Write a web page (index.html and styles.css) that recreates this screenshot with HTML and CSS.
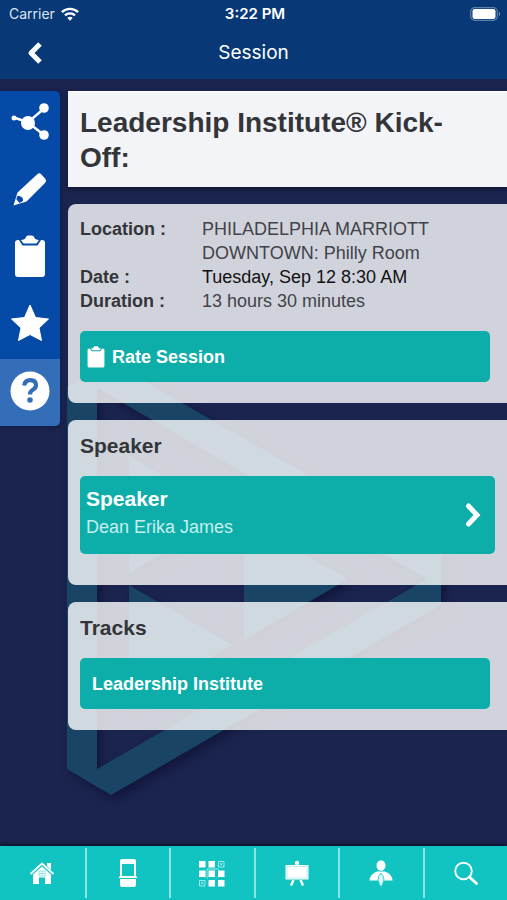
FILE: index.html
```html
<!DOCTYPE html>
<html lang="en">
<head>
<meta charset="utf-8">
<meta name="viewport" content="width=device-width, initial-scale=1">
<title>Session</title>
<link rel="stylesheet" href="styles.css">
</head>
<body>
<header class="header">
  <div class="status">
    <div class="status-left">
      <span>Carrier</span>
      <svg width="18" height="14" viewBox="0 0 18 14" fill="none" stroke="#fff" stroke-width="2.4" aria-hidden="true">
        <path d="M.9 5.2a11.6 11.6 0 0 1 16.2 0M4 8.4a7.2 7.2 0 0 1 10 0"/>
        <path d="M6.3 11a3.9 3.9 0 0 1 5.4 0L9 13.8z" fill="#fff" stroke="none"/>
      </svg>
    </div>
    <span class="status-time">3:22 PM</span>
    <svg class="battery" width="31" height="14" viewBox="0 0 31 14" aria-hidden="true">
      <rect x=".7" y=".7" width="26.6" height="12.6" rx="4" fill="none" stroke="#5f80aa" stroke-width="1.2"/>
      <rect x="2.5" y="2" width="23" height="10" rx="2.2" fill="#fff"/>
      <path d="M29 4.5q2 2.5 0 5z" fill="#7f9bbd"/>
    </svg>
  </div>
  <div class="navbar">
    <button class="back" aria-label="Back">
      <svg width="18" height="24" viewBox="0 0 18 24"><path d="M14 3L5 12l9 9" fill="none" stroke="#fff" stroke-width="5" stroke-linecap="butt" stroke-linejoin="round"/></svg>
    </button>
    <h1>Session</h1>
  </div>
</header>

<main class="main">
  <svg class="backdrop" width="390" height="450" viewBox="60 355 390 450" aria-hidden="true">
    <g fill="#1a4465" fill-rule="evenodd">
      <path d="M67 387L111 362L441 552V605L111 795L67 769zM97 388V769L427 579z"/>
      <path d="M129 456L232 515L129 573zM129 585L232 645L129 704zM244 520L348 579L244 640z"/>
    </g>
  </svg>

  <nav class="rail" aria-label="Session tools">
    <button aria-label="Share">
      <svg width="40" height="40" viewBox="0 0 40 40" fill="#fff"><path d="M4 14.500L18 19.500L34 5.500M18 19.500L34 32" fill="none" stroke="#fff" stroke-width="2.400"/><circle cx="18" cy="20" r="7"/><circle cx="34" cy="5" r="4.800"/><circle cx="34" cy="32" r="4.800"/><circle cx="4" cy="15" r="2.500"/></svg>
    </button>
    <button aria-label="Notes">
      <svg width="40" height="40" viewBox="0 0 40 40"><path d="M3.500 35.500L7.500 22.500L27 4.500Q29 2.500 31 4L35.500 9Q37 11 35 13L16.500 31.500z" fill="#fff"/><path d="M6.500 29.500Q6.500 25 9.500 26Q13.500 27 13 31L9.500 33z" fill="#0a4aa5"/></svg>
    </button>
    <button aria-label="Survey">
      <svg width="40" height="44" viewBox="0 0 40 44" fill="#fff"><path d="M8 5H9L12.500 10.500H27.500L31 5H32Q35 5 35 8V39Q35 42 32 42H8Q5 42 5 39V8Q5 5 8 5z"/><path d="M11 5Q15 4.500 15.500 3Q16 .500 18 .500H22Q24 .500 24.500 3Q25 4.500 29 5L26.500 8.500H13.500z"/></svg>
    </button>
    <button aria-label="Favorite">
      <svg width="40" height="40" viewBox="0 0 40 40"><path d="M20 1L25.500 13.500L38.500 15L29 24L31.500 36.500L20 30.500L8.500 36.500L11 24L1.500 15L14.500 13.500z" fill="#fff" stroke="#fff" stroke-linejoin="round"/></svg>
    </button>
    <button class="active" aria-label="Help">
      <svg width="40" height="40" viewBox="0 0 40 40"><circle cx="20" cy="20" r="19.500" fill="#fff"/><path d="M14.200 14.500Q15 9.200 20.200 9.200Q26 9.200 26 14.200Q26 17 22.500 19Q20 20.500 20 23.500" fill="none" stroke="#346db8" stroke-width="4.200"/><circle cx="20" cy="29" r="2.800" fill="#346db8"/></svg>
    </button>
  </nav>

  <div class="content">
    <section class="title-card"><h2>Leadership Institute® Kick-Off:</h2></section>

    <section class="card">
      <dl class="facts">
        <dt>Location :</dt><dd>PHILADELPHIA MARRIOTT DOWNTOWN: Philly Room</dd>
        <dt>Date :</dt><dd class="strong">Tuesday, Sep 12 8:30 AM</dd>
        <dt>Duration :</dt><dd>13 hours 30 minutes</dd>
      </dl>
      <button class="tile rate">
        <svg width="18" height="22" viewBox="4 0 32 44" preserveAspectRatio="none" fill="#fff" aria-hidden="true"><path d="M8 5H9L12.500 10.500H27.500L31 5H32Q35 5 35 8V40Q35 43 32 43H8Q5 43 5 40V8Q5 5 8 5z"/><path d="M11 5Q15 4.500 15.500 3Q16 .500 18 .500H22Q24 .500 24.500 3Q25 4.500 29 5L26.500 8.500H13.500z"/></svg>
        Rate Session
      </button>
    </section>

    <section class="card speaker-card">
      <h3>Speaker</h3>
      <a class="tile speaker" href="#speaker">
        <span class="speaker-text"><strong>Speaker</strong><span>Dean Erika James</span></span>
        <svg width="18" height="26" viewBox="0 0 18 26" aria-hidden="true"><path d="M4.500 4L13 13l-8.500 9" fill="none" stroke="#fff" stroke-width="5" stroke-linecap="round" stroke-linejoin="miter"/></svg>
      </a>
    </section>

    <section class="card">
      <h3>Tracks</h3>
      <a class="tile track" href="#track">Leadership Institute</a>
    </section>
  </div>
</main>

<nav class="tabs" aria-label="Main">
  <a href="#home" aria-label="Home"><svg width="28" height="30" viewBox="0 0 28 30" fill="#fff"><path d="M19 5h4v7l-4-4z"/><path d="M2.500 16L14 5.500L25.500 16" fill="none" stroke="#fff" stroke-width="1.800"/><path d="M5 16.500L14 8.500L23 16.500V26H17V19.500H11V26H5z"/><path d="M11 13h6v5h-6zM14 13v5M11 15.500h6" fill="none" stroke="#7fdfdd" stroke-width=".8"/></svg></a>
  <a href="#device" aria-label="Mobile"><svg width="28" height="30" viewBox="0 0 28 30" fill="#fff"><path fill-rule="evenodd" d="M8 1h12q2 0 2 2v16H6V3q0-2 2-2zM8 6v12h12V6z"/><path d="M5 18.500h18v1.500H5zM6 21h16v6q0 2-2 2H8q-2 0-2-2z"/></svg></a>
  <a href="#grid" aria-label="Menu"><svg width="28" height="30" viewBox="0 0 28 30" fill="#fff"><path d="M1 3h6.500v6.500H1zM10.500 3H17v6.500h-6.500zM1 12.500h6.500V19H1zM10.500 12.500H17V19h-6.500zM20 12.500h6.500V19H20zM10.500 22H17v6.500h-6.500zM20 22h6.500v6.500H20z"/><path d="M20.500 3.500H26V9h-5.500zM1.500 22.500H7V28H1.500zM22 5l2.500 2.500M24.500 5L22 7.500M3 24l2.500 2.500M5.500 24L3 26.500M9 20.500v-9.500h12" fill="none" stroke="#9ee9e7" stroke-width="1"/></svg></a>
  <a href="#sessions" aria-label="Sessions"><svg width="28" height="30" viewBox="0 0 28 30" fill="#fff"><circle cx="14" cy="5" r="2.200"/><path d="M2.500 7h23v14.500h-23z"/><path d="M4 8.500h20V20H4z" fill="none" stroke="#a8ebea" stroke-width=".8"/><path d="M10.500 22L8 27.500M17.500 22L20 27.500" stroke="#fff" stroke-width="2.400"/></svg></a>
  <a href="#people" aria-label="People"><svg width="28" height="30" viewBox="0 0 28 30" fill="#fff"><ellipse cx="14" cy="7.500" rx="4.500" ry="5.200"/><path d="M2.500 22.500Q3 16 10 13.500H18Q25 16 25.500 22.500z"/><path d="M14 15Q17 18 17 22Q16 26 14 29.500Q12 26 11 22Q11 18 14 15z" fill="#d9f7f6" stroke="#12c4c1" stroke-width=".8"/></svg></a>
  <a href="#search" aria-label="Search"><svg width="28" height="30" viewBox="0 0 28 30" fill="none" stroke="#fff"><circle cx="11.500" cy="13" r="8.300" stroke-width="1.900"/><path d="M17.500 19l7 6.500" stroke-width="2.800" stroke-linecap="round"/></svg></a>
</nav>
</body>
</html>
```
FILE: styles.css
```css
* { box-sizing: border-box; }
body {
  margin: 0;
  min-height: 100vh;
  display: flex;
  flex-direction: column;
  background: #1a244f;
  color: #333539;
  font-family: "Liberation Sans", Arial, sans-serif;
  font-size: 18px;
  line-height: 24px;
}
h1, h2, h3, dl, dd { margin: 0; }
button { border: 0; padding: 0; font: inherit; color: inherit; background: none; }
a { color: inherit; text-decoration: none; }
svg { display: block; flex: none; }

.header {
  background: #083976;
  color: #fff;
  font-family: Inter, "Liberation Sans", sans-serif;
}
.status {
  display: grid;
  grid-template-columns: 1fr auto 1fr;
  align-items: center;
  height: 27px;
  padding: 0 6px 0 9px;
  font-size: 14px;
}
.status-left { display: flex; align-items: center; gap: 6px; color: #dce6f2; }
.status-time { font-size: 15px; font-weight: 600; }
.battery { justify-self: end; }
.navbar {
  display: grid;
  grid-template-columns: 1fr auto 1fr;
  align-items: center;
  height: 52px;
  padding: 0 26px;
}
.back { justify-self: start; }
.navbar h1 { font-size: 19px; font-weight: 400; }

.main {
  position: relative;
  flex: 1;
  display: flex;
  align-items: flex-start;
  gap: 8px;
  padding: 12px 0;
}
.backdrop {
  position: absolute;
  left: 60px;
  top: 276px;
  filter: drop-shadow(4px 5px 5px rgba(10, 8, 40, .5));
}
.rail {
  position: relative;
  flex: 0 0 60px;
  border-radius: 0 5px 5px 0;
  background: #044aa6;
  overflow: hidden;
  box-shadow: 0 1px 4px #101a40;
}
.rail button {
  display: flex;
  align-items: center;
  justify-content: center;
  width: 100%;
  height: 67px;
  padding-bottom: 4px;
}
.rail .active { background: #346db8; }

.content {
  position: relative;
  flex: 1;
  min-width: 0;
  display: flex;
  flex-direction: column;
  gap: 17px;
}
.title-card {
  padding: 13px 40px 12px 12px;
  background: #f3f4f7;
  border-top: 1px solid #fff;
  box-shadow: 0 2px 4px #10152f;
}
.title-card h2 { font-size: 28px; line-height: 35px; }
.card {
  padding: 13px 17px 21px 12px;
  background: rgba(255, 255, 255, .8);
  border-radius: 8px 0 0 8px;
}
.speaker-card { padding-right: 12px; padding-bottom: 31px; }
.card h3 { margin-bottom: 17px; font-size: 21px; line-height: 26px; }
.facts { display: grid; grid-template-columns: 122px 1fr; margin-bottom: 18px; }
.facts dt { font-weight: 700; }
.facts dd { max-width: 240px; color: #414349; }
.facts .strong { color: #111; }

.tile {
  display: flex;
  align-items: center;
  width: 100%;
  min-height: 51px;
  border-radius: 5px;
  background: #0daea9;
  color: #fff;
  font-weight: 700;
}
.rate { gap: 7px; padding: 0 7px; }
.track { padding: 0 12px; }
.speaker {
  justify-content: space-between;
  min-height: 78px;
  padding: 8px 13px 12px 6px;
  font-weight: 400;
}
.speaker svg { margin-top: 4px; }
.speaker-text { display: flex; flex-direction: column; gap: 4px; color: #c5efee; }
.speaker-text strong { font-size: 21px; color: #fff; }

.tabs {
  position: relative;
  display: grid;
  grid-template-columns: repeat(6, 1fr);
  height: 54px;
  padding: 2px 0;
  background: #12c4c1;
  box-shadow: 0 -1px 4px #080d20;
}
.tabs a { display: flex; align-items: center; justify-content: center; }
.tabs a + a { border-left: 2px solid #8be6e3; }
```
